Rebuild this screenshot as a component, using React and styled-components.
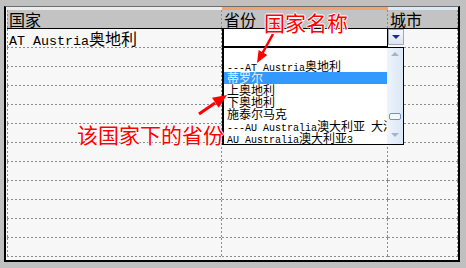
import React from 'react';
import styled, { createGlobalStyle } from 'styled-components';

const GlobalStyle = createGlobalStyle`
  html, body {
    margin: 0;
    padding: 0;
    background: #c0c0c0;
  }
  body {
    width: 466px;
    height: 268px;
    overflow: hidden;
  }
`;

const hDots = 'repeating-linear-gradient(to right, #8c8c8c 0 2px, transparent 2px 4px)';
const vDots = 'repeating-linear-gradient(to bottom, #8c8c8c 0 2px, transparent 2px 4px)';

// #region Styles

const Page = styled.div`
  position: relative;
  width: 466px;
  height: 268px;
  padding: 6px 0 0 4px;
  box-sizing: border-box;
  font-family: "Liberation Mono", "Noto Sans CJK SC", monospace;
`;

const Frame = styled.div`
  width: 456px;
  height: 256px;
  box-sizing: border-box;
  border: 2px solid #000;
  border-top: 1px solid #6e6e6e;
  background: #f7f7f7;
  padding-left: 1px;
  overflow: hidden;
`;

const Sheet = styled.div`
  position: relative;
  display: grid;
  grid-template-columns: 215px 166px 70px;
  grid-template-rows: 22px;
  grid-auto-rows: 19px;
`;

const HeadCell = styled.div`
  box-sizing: border-box;
  height: 22px;
  border-top: 3px solid ${p => p.$strip};
  border-bottom: 1px solid #000;
  background:
    ${p => p.$first ? `${vDots} left top / 1px 100% no-repeat,` : ''}
    ${vDots} right top / 1px 100% no-repeat,
    #c3c3c3;
  padding-left: 2px;
  font-family: "Noto Sans CJK SC", sans-serif;
  font-size: 16px;
  line-height: 18px;
  color: #000;
`;

const Cell = styled.div`
  box-sizing: border-box;
  background:
    ${p => p.$first ? `${vDots} left top / 1px 100% no-repeat,` : ''}
    ${hDots} left bottom / 100% 1px no-repeat,
    ${vDots} right top / 1px 100% no-repeat;
  padding-left: 2px;
  font-size: 16px;
  line-height: 18px;
  white-space: nowrap;
  color: #000;
`;

const Lat = styled.span`
  font-family: "Liberation Mono", monospace;
  font-size: ${p => p.$size}px;
`;

const Han = styled.span`
  font-family: "Noto Sans CJK SC", sans-serif;
`;

const Combo = styled.div`
  position: absolute;
  left: 215px;
  top: 21px;
  display: flex;
  flex-direction: column;
`;

const ComboTop = styled.div`
  display: flex;
  align-items: flex-start;
`;

const EditBox = styled.div`
  box-sizing: border-box;
  width: 166px;
  height: 19px;
  background: #fff;
  border: 1px solid #000;
  border-left-width: 2px;
`;

const DropButton = styled.div`
  box-sizing: border-box;
  width: 16px;
  height: 16px;
  margin-top: 1px;
  border: 1px solid #9eaabb;
  background: linear-gradient(#f6f8fc, #dbe4f0);
  display: flex;
  align-items: center;
  justify-content: center;
  &::after {
    content: "";
    border-left: 4px solid transparent;
    border-right: 4px solid transparent;
    border-top: 4px solid #1d2b86;
  }
`;

const List = styled.div`
  box-sizing: border-box;
  width: 182px;
  height: 98px;
  background: #fff;
  border: 1px solid #000;
  border-left-width: 2px;
  display: flex;
`;

const Items = styled.div`
  flex: 1;
  overflow: hidden;
`;

const Item = styled.div`
  height: 12px;
  line-height: 12px;
  padding-left: 3px;
  font-size: 12px;
  white-space: nowrap;
  color: ${p => p.$selected ? '#e8f2ff' : '#000'};
  background: ${p => p.$selected ? '#3399ff' : 'transparent'};
`;

const Scrollbar = styled.div`
  width: 16px;
  display: flex;
  flex-direction: column;
  align-items: center;
  background: linear-gradient(to right, #eef4fb, #dbe7f5);
`;

const Arrow = styled.div`
  height: ${p => p.$h}px;
  display: flex;
  align-items: center;
  &::after {
    content: "";
    border-left: 4px solid transparent;
    border-right: 4px solid transparent;
    ${p => p.$up ? 'border-bottom' : 'border-top'}: 4px solid #a3b4c9;
  }
`;

const Thumb = styled.div`
  box-sizing: border-box;
  width: 12px;
  height: 7px;
  margin-top: 53px;
  border: 1px solid #6f93cc;
  border-radius: 2px;
  background: #f4f8ff;
`;

const Spacer = styled.div`
  flex: 1;
`;

const Note = styled.div`
  position: absolute;
  left: ${p => p.$x}px;
  top: ${p => p.$y}px;
  font-family: "Noto Sans CJK SC", sans-serif;
  font-size: 21px;
  line-height: 1;
  white-space: nowrap;
  color: #f00;
  text-shadow: 1px 0 #fff, -1px 0 #fff, 0 1px #fff, 0 -1px #fff;
`;

const Arrows = styled.svg`
  position: absolute;
  left: 0;
  top: 0;
  pointer-events: none;
`;

// #endregion Styles

function Mixed({ text, size }) {
  const runs = text.match(/[\x00-\x7f]+|[^\x00-\x7f]+/g) || [];
  return runs.map((run, i) =>
    /^[\x00-\x7f]/.test(run)
      ? <Lat key={i} $size={size}>{run}</Lat>
      : <Han key={i}>{run}</Han>
  );
}

const provinces = [
  '',
  '---AT Austria奥地利',
  '蒂罗尔',
  '上奥地利',
  '下奥地利',
  '施泰尔马克',
  '---AU Australia澳大利亚 大洋洲',
  'AU Australia澳大利亚3',
];

const headers = [
  { title: '国家', strip: '#ececec' },
  { title: '省份', strip: '#f4a46a' },
  { title: '城市', strip: '#dce8f5' },
];

export default function App() {
  const rows = Array.from({ length: 12 });

  return (
    <>
      <GlobalStyle />
      <Page>
        <Frame>
          <Sheet>
            {headers.map((h, i) => (
              <HeadCell key={h.title} $first={i === 0} $strip={h.strip}>{h.title}</HeadCell>
            ))}
            {rows.map((_, r) => (
              <React.Fragment key={r}>
                <Cell $first>
                  {r === 0 && <Mixed text="AT Austria奥地利" size={13.33} />}
                </Cell>
                <Cell />
                <Cell />
              </React.Fragment>
            ))}

            <Combo>
              <ComboTop>
                <EditBox />
                <DropButton />
              </ComboTop>
              <List>
                <Items>
                  {provinces.map((p, i) => (
                    <Item key={i} $selected={i === 2}>
                      <Mixed text={p} size={10} />
                    </Item>
                  ))}
                </Items>
                <Scrollbar>
                  <Arrow $up $h={12} />
                  <Thumb />
                  <Spacer />
                  <Arrow $h={18} />
                </Scrollbar>
              </List>
            </Combo>
          </Sheet>
        </Frame>

        <Arrows width="466" height="268" viewBox="0 0 466 268">
          <line x1="273" y1="34" x2="262" y2="54" stroke="#f00" strokeWidth="2.5" />
          <polygon points="257,63 267.3,55 258.6,50.1" fill="#f00" />
          <line x1="199" y1="114" x2="215" y2="103" stroke="#f00" strokeWidth="3" />
          <polygon points="227,95 218.7,107.8 212,97.8" fill="#f00" />
        </Arrows>

        <Note $x={264} $y={12}>国家名称</Note>
        <Note $x={77} $y={124}>该国家下的省份</Note>
      </Page>
    </>
  );
}
